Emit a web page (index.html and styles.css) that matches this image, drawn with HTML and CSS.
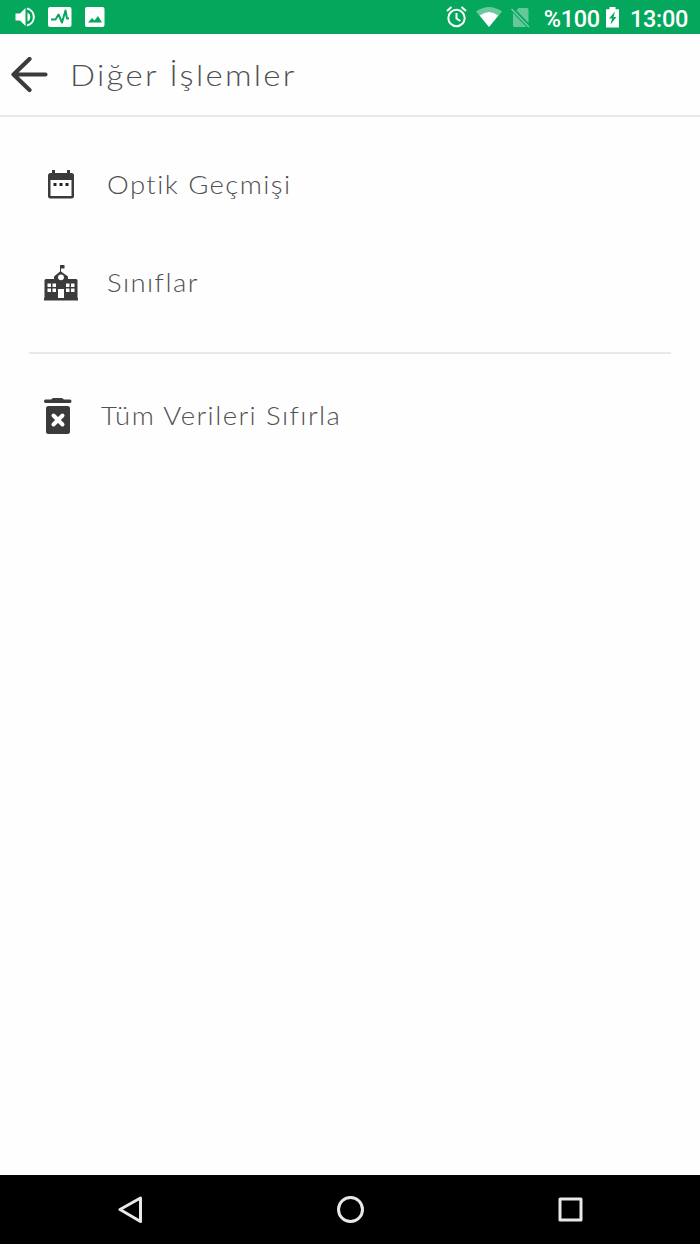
FILE: index.html
```html
<!DOCTYPE html>
<html lang="tr">
<head>
    <meta charset="UTF-8">
    <title>Diğer İşlemler</title>
    <link rel="stylesheet" href="styles.css">
</head>
<body>
    <div class="status-bar">
        <div class="status-left">
            <svg width="20" height="20" viewBox="0 0 20 20">
                <path fill="#fff" d="M.5 6.500H5L10.500 1v18l-5.500-5.500H.5zM12.500 5.500a5 5 0 0 1 0 9z"/>
                <path fill="none" stroke="#fff" stroke-width="2" d="M12 1.500a8.700 8.700 0 0 1 0 17"/>
            </svg>
            <svg width="24" height="20" viewBox="0 0 24 20">
                <rect width="23.500" height="20" rx="2" fill="#fff"/>
                <path fill="none" stroke="#04a75c" stroke-width="2" stroke-linejoin="round" d="M3 12.500h4.500l3-5 3.500 8 3.500-12 1.500 8h2"/>
            </svg>
            <svg width="20" height="20" viewBox="0 0 20 20">
                <rect width="19.500" height="20" rx="2" fill="#fff"/>
                <path fill="#04a75c" d="M3 15.500l4-4.500 2.500 2.500L13 9l4 6.500z"/>
            </svg>
        </div>
        <div class="status-right">
            <svg width="22" height="22" viewBox="0 0 22 22" fill="none" stroke="#fff" stroke-width="2">
                <circle cx="10.500" cy="12" r="8.200"/>
                <path d="M10.500 7v5.500l3.800 2.500M1 5l4.500-4M20 5l-4.500-4"/>
            </svg>
            <svg class="wifi" width="26" height="20" viewBox="0 0 26 20">
                <path fill="#fff" opacity=".4" d="M0 4.500Q13-4.500 26 4.500L13 20z"/>
                <path fill="#fff" d="M3.700 8.500Q13 1.500 22.300 8.500L13 20z"/>
            </svg>
            <svg class="sim" width="19" height="21" viewBox="0 0 19 21">
                <path fill="#fff" opacity=".38" d="M7.500 1H16q1.500 0 1.500 1.500v13.500L5.500 3.500zM2 6l13.500 14H3.500Q2 20 2 18.500z"/>
                <path stroke="#fff" opacity=".45" stroke-width="1.500" d="M.5 2l17.500 18"/>
            </svg>
            <span class="battery-text">%100</span>
            <svg class="battery" width="14" height="21" viewBox="0 0 14 21">
                <path fill="#fff" d="M3.500 0h6v2.300H13V20.500H0V2.300h3.500z"/>
                <path fill="#04a75c" d="M9 4.500L3 11.500h3L4.500 17.500l6-7.500H7.500z"/>
            </svg>
            <span class="clock">13:00</span>
        </div>
    </div>

    <div class="header">
        <svg width="38" height="36" viewBox="0 0 38 36" fill="none" stroke="#3b3b3b" stroke-width="4.200" stroke-linecap="round" stroke-linejoin="round">
            <path d="M34.500 17.500H2.500M18.500 2L2.500 17.500l16 15.500"/>
        </svg>
        <h1 class="title">Diğer İşlemler</h1>
    </div>

    <div class="menu">
        <div class="menu-item">
            <svg class="menu-icon" width="34" height="38" viewBox="0 0 34 38">
                <path fill="#3b3b3b" d="M8 4h3v3h12V4h3v3h1.500Q30 7 30 9.500V30Q30 32.500 27.500 32.500h-21Q4 32.500 4 30V9.500Q4 7 6.500 7H8z"/>
                <path fill="#fff" d="M6.500 14h21v16h-21z"/>
                <path fill="#222" d="M9.500 17h3v3h-3zM15.500 17h3v3h-3zM21.500 17h3v3h-3z"/>
            </svg>
            <span class="label">Optik Geçmişi</span>
        </div>
        <div class="menu-item">
            <svg class="menu-icon" width="34" height="38" viewBox="0 0 34 38">
                <path fill="#3b3b3b" d="M16 1h4.500v3.500h-3.500v3l7 5v2.500h8q1.500 0 1.500 1.500v17.500h.5v2.500H0V34h.5V16.500q0-1.500 1.500-1.500h8v-2.500l6-5z"/>
                <circle cx="17" cy="13.300" r="2.900" fill="#fff"/>
                <path fill="#fff" d="M14 25h6v9h-6zM3.500 19.500H7v3.500H3.500zM8.500 19.500H12v3.500H8.500zM3.500 24.500H7v3.500H3.500zM8.500 24.500H12v3.500H8.500zM22 19.500h3.500v3.500H22zM27 19.500h3.500v3.500H27zM22 24.500h3.500v3.500H22zM27 24.500h3.500v3.500H27z"/>
            </svg>
            <span class="label">Sınıflar</span>
        </div>
    </div>

    <div class="divider"></div>

    <div class="menu-item reset">
        <svg class="reset-icon" width="28" height="38" viewBox="0 0 28 38">
            <path fill="#3b3b3b" d="M1.500 2.500H7L9 1h9l2 1.500h6q1.500 0 1.500 1.700t-1.500 1.800H1.500Q0 6 0 4.200t1.500-1.700zM4.500 9h19q2.500 0 2.500 2.500v23q0 2.500-2.500 2.500h-19q-2.500 0-2.500-2.500v-23Q2 9 4.500 9z"/>
            <path stroke="#fff" stroke-width="4" stroke-linecap="round" d="M9.500 18.500l9 9M18.500 18.500l-9 9"/>
        </svg>
        <span class="label">Tüm Verileri Sıfırla</span>
    </div>

    <div class="nav-bar">
        <svg width="28" height="28" viewBox="0 0 28 28">
            <path d="M24.500 2v23.500L4 13.500z"/>
        </svg>
        <svg width="28" height="28" viewBox="0 0 28 28">
            <circle cx="13.500" cy="13.500" r="12"/>
        </svg>
        <svg width="28" height="28" viewBox="0 0 28 28">
            <rect x="3" y="3" width="21" height="21"/>
        </svg>
    </div>
</body>
</html>
```
FILE: styles.css
```css
* {
    box-sizing: border-box;
}
body {
    margin: 0;
    height: 1244px;
    display: flex;
    flex-direction: column;
    background: #fefefe;
    color: #505050;
    font-family: Lato, "Open Sans", sans-serif;
    font-weight: 300;
}
svg {
    display: block;
    flex: none;
}
.status-bar {
    height: 34px;
    padding: 0 12px 0 15px;
    display: flex;
    align-items: center;
    justify-content: space-between;
    background: #04a75c;
    color: #fff;
    font-family: Roboto, sans-serif;
    font-size: 23.5px;
    font-weight: 500;
    letter-spacing: -0.3px;
}
.status-left,
.status-right {
    display: flex;
    align-items: center;
}
.status-left {
    gap: 13px;
}
.wifi {
    margin-left: 8px;
}
.sim {
    margin-left: 9px;
}
.battery-text {
    margin: 3px 6px 0 14px;
}
.clock {
    margin: 3px 0 0 10px;
}
.header {
    height: 83px;
    padding-left: 11px;
    display: flex;
    align-items: center;
    gap: 21px;
    border-bottom: 2px solid #e8e8e8;
}
/* wide, light lettering */
.title,
.label {
    transform: scaleX(1.1);
    transform-origin: left;
    white-space: nowrap;
}
.title {
    margin: 0 0 2px;
    font-size: 30px;
    font-weight: 300;
    letter-spacing: 2.05px;
}
.menu {
    padding: 19px 44px 20px;
}
.menu-item {
    height: 98px;
    display: flex;
    align-items: center;
    gap: 29px;
}
.label {
    margin-bottom: 3px;
    font-size: 25px;
    letter-spacing: 1.3px;
}
.divider {
    height: 2px;
    margin: 0 29px;
    background: #e8e8e8;
}
.reset {
    height: 124px;
    padding-left: 44px;
}
.nav-bar {
    height: 69px;
    margin-top: auto;
    padding: 0 115px 0 116px;
    display: flex;
    align-items: center;
    justify-content: space-between;
    background: #000;
    fill: none;
    stroke: #e8e8e8;
    stroke-width: 3;
    stroke-linejoin: round;
}
```
